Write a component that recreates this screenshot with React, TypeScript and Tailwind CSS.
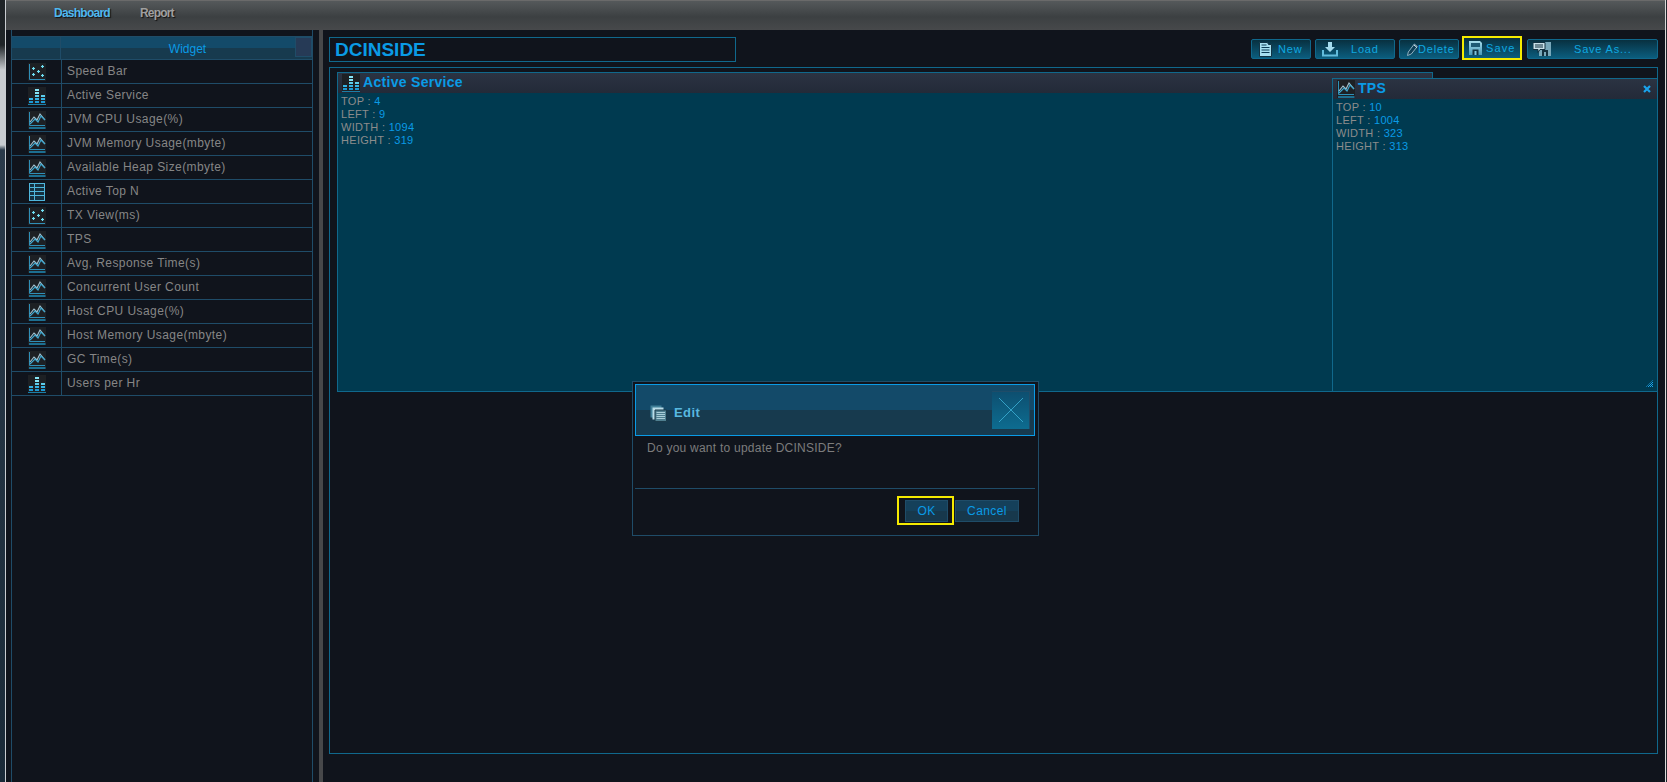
const font = "font-['Liberation_Sans',Arial,sans-serif]";

const panel = "bg-[#10141c]";

function ScatterIcon() {
  return (
    <svg width="18" height="18" viewBox="0 0 18 18" className="block">
      <rect width="18" height="18" fill="#1d2024" />
      <path d="M1.500 1v15.500H17" stroke="#2f8fb8" fill="none" />
      <path d="M4 5.500h3M5.500 4v3M13 3.500h3M14.500 2v3M9 8.500h3M10.500 7v3M4 11.500h3M5.500 10v3M13 12.500h3M14.500 11v3" stroke="#6fe0f4" strokeWidth="1.200" />
    </svg>
  );
}

function BarsIcon() {
  return (
    <svg width="18" height="18" viewBox="0 0 18 18" className="block">
      <rect width="18" height="18" fill="#1d2024" />
      <path d="M7 3h4M7 6h4" stroke="#86e4f6" strokeWidth="2" />
      <path d="M7 9h4M13 9h4" stroke="#5ccdec" strokeWidth="2" />
      <path d="M1 12h4M7 12h4M13 12h4" stroke="#35b3e4" strokeWidth="2" />
      <path d="M1 15h4M7 15h4M13 15h4" stroke="#1d9ad6" strokeWidth="2" />
      <path d="M0 17.500h18" stroke="#1a7fa8" />
    </svg>
  );
}

function LineIcon() {
  return (
    <svg width="18" height="18" viewBox="0 0 18 18" className="block">
      <rect width="18" height="18" fill="#1d2024" />
      <path d="M1.500 1v13.500H17" stroke="#2f8fb8" fill="none" />
      <path d="M2 11l4-5 3 3 3-6 5 6" stroke="#a4c4d2" strokeWidth="1.100" fill="none" />
      <path d="M2 13l5-5 3 3 3-6 4 4" stroke="#3fa8d0" strokeWidth="1.100" fill="none" />
      <path d="M1 17h16.500" stroke="#1d8ab6" strokeWidth="1.500" />
    </svg>
  );
}

function GridIcon() {
  return (
    <svg width="16" height="18" viewBox="0 0 16 18" className="block">
      <rect x="0.500" y="0.500" width="15" height="17" fill="#15303f" stroke="#4fb6dc" />
      <path d="M0 4.500h16M0 8.500h16M0 12.500h16M5.500 0v18" stroke="#4fb6dc" />
    </svg>
  );
}

const rows: [string, React.ReactNode][] = [
  ["Speed Bar", <ScatterIcon />],
  ["Active Service", <BarsIcon />],
  ["JVM CPU Usage(%)", <LineIcon />],
  ["JVM Memory Usage(mbyte)", <LineIcon />],
  ["Available Heap Size(mbyte)", <LineIcon />],
  ["Active Top N", <GridIcon />],
  ["TX View(ms)", <ScatterIcon />],
  ["TPS", <LineIcon />],
  ["Avg, Response Time(s)", <LineIcon />],
  ["Concurrent User Count", <LineIcon />],
  ["Host CPU Usage(%)", <LineIcon />],
  ["Host Memory Usage(mbyte)", <LineIcon />],
  ["GC Time(s)", <LineIcon />],
  ["Users per Hr", <BarsIcon />],
];

function Sidebar() {
  return (
    <aside className="ml-[5px] flex w-[302px] shrink-0 flex-col border-x border-[#1f4c68] pt-[6px]">
      <div className="relative flex h-[24px] border-y border-[#1f4c68] bg-[linear-gradient(#134a69_50%,#173a4e_50%)] text-[12px] text-[#0a9be6]">
        <div className="w-[49px] border-r border-[#1f4c68]" />
        <div className="flex flex-1 items-center justify-center pl-[2px] pt-[1px]">Widget</div>
        <div className="absolute right-0 top-0 h-[20px] w-[17px] border border-[#1f4c68] bg-[#263a56]" />
      </div>
      {rows.map(([name, icon]) => (
        <div key={name} className="flex h-[24px] border-b border-[#1f4c68] text-[12px] tracking-[0.42px] text-[#868686]">
          <div className="flex w-[50px] shrink-0 items-center justify-center border-r border-[#1f4c68]">{icon}</div>
          <div className="flex flex-1 items-center pb-[2px] pl-[5px]">{name}</div>
        </div>
      ))}
    </aside>
  );
}

function ToolButton({ icon, label, className, gap }: { icon: React.ReactNode; label: string; className: string; gap: string }) {
  return (
    <div className={`flex h-[20px] items-center rounded-[2px] border border-[#10688c] bg-[linear-gradient(#083040,#0b5d7e)] text-[11px] tracking-[0.8px] text-[#0fa8e0] ${className}`}>
      {icon}
      <span className={gap}>{label}</span>
    </div>
  );
}

function NewIcon() {
  return (
    <svg width="13" height="15" viewBox="0 0 13 15">
      <path d="M0.500 0.500h8l1 2h3v12h-12z" fill="#a8e0f0" stroke="#123445" />
      <path d="M2.500 5.500h8M2.500 8h8M2.500 10.500h8M2.500 3h5" stroke="#0d3d55" />
    </svg>
  );
}

function LoadIcon() {
  return (
    <svg width="16" height="15" viewBox="0 0 16 15">
      <path d="M6 0h4v5h3l-5 5-5-5h3z" fill="#a4dcee" />
      <path d="M1 8v5.500h14V8" stroke="#62bcdc" strokeWidth="2" fill="none" />
    </svg>
  );
}

function PencilIcon() {
  return (
    <svg width="11" height="13" viewBox="0 0 11 13">
      <path d="M0.500 12.500l0.800-3.500 6-8 3 2.500-6 7.500z" fill="#0f4058" stroke="#90b0c0" />
      <path d="M7 2l3 2.500" stroke="#d8e8ee" />
    </svg>
  );
}

function SaveIcon() {
  return (
    <svg width="13" height="14" viewBox="0 0 13 14">
      <defs>
        <linearGradient id="floppy" x1="0" y1="0" x2="0" y2="1">
          <stop offset="0" stopColor="#a6dcea" />
          <stop offset="1" stopColor="#4898b8" />
        </linearGradient>
      </defs>
      <path d="M0 0h11l2 2v12H0z" fill="url(#floppy)" />
      <rect x="2" y="2" width="9" height="4" fill="#1e5a74" />
      <path d="M3.500 14V8.500h6V14" fill="#123445" />
      <rect x="5.500" y="10" width="2" height="4" fill="#7fc4dc" />
    </svg>
  );
}

function SaveAsIcon() {
  return (
    <svg width="18" height="14" viewBox="0 0 18 14">
      <path d="M6 0h12v14H6z" fill="#78a8ba" />
      <rect x="9" y="8" width="6" height="6" fill="#12303f" />
      <rect x="11" y="10" width="2" height="4" fill="#78a8ba" />
      <path d="M0 0.500h12v7H7l-2 3v-3H0z" fill="#c8e0e8" stroke="#12303f" />
      <path d="M2 3h8M2 5h8" stroke="#12303f" />
    </svg>
  );
}

function CloseGlyph() {
  return (
    <svg width="8" height="8" viewBox="0 0 8 8">
      <path d="M1 1l6 6M7 1l-6 6" stroke="#1aa3ec" strokeWidth="2.200" />
    </svg>
  );
}

function WidgetHeader({ icon, title, close }: { icon: React.ReactNode; title: string; close?: boolean }) {
  return (
    <div className="flex h-[20px] items-center bg-[linear-gradient(#2b3342,#232a38)] pl-[4px] pr-[6px]">
      {icon}
      <span className="mb-[2px] ml-[3px] text-[14px] font-bold tracking-[0.3px] text-[#0a9be6]">{title}</span>
      {close && <span className="ml-auto flex"><CloseGlyph /></span>}
    </div>
  );
}

function Props({ values }: { values: [string, number][] }) {
  return (
    <div className="pl-[3px] pt-[2px] text-[11px] leading-[13px] tracking-[0.3px]">
      {values.map(([k, v]) => (
        <div key={k} className="text-[#8c8c8c]">
          {k} : <span className="text-[#0a9be6]">{v}</span>
        </div>
      ))}
    </div>
  );
}

function Dialog() {
  return (
    <div className={`absolute left-[632px] top-[381px] h-[155px] w-[407px] border border-[#1f4c68] ${panel} py-[2px] pl-[2px] pr-[3px]`}>
      <div className="flex h-[52px] items-center border border-[#0a9be6] bg-[linear-gradient(#134a69_50%,#173a4e_50%)] pl-[14px] pr-[4px]">
        <div className="mt-[6px] flex items-center">
          <svg width="17" height="17" viewBox="0 0 17 17">
            <path d="M0.500 0.500h11v12h-11z" fill="#3f7f98" />
            <path d="M2.500 2.500h11v12h-11z" fill="#b8dce8" />
            <path d="M5 5h11.500v11.500H5z" fill="#4f7f90" stroke="#1b3a4a" />
            <path d="M6.500 7.500h8.500M6.500 9.500h8.500M6.500 11.500h8.500M6.500 13.500h8.500" stroke="#a9cdd8" />
          </svg>
          <span className="ml-[7px] text-[13px] font-bold tracking-[0.4px] text-[#58b8e0]">Edit</span>
        </div>
        <div className="ml-auto mb-[1px] flex size-[38px] items-center justify-center border-t border-r border-[#1f4c68] bg-[linear-gradient(#0d4f70,#0d6c90)]">
          <svg width="26" height="26" viewBox="0 0 26 26">
            <path d="M1 1l24 24M25 1L1 25" stroke="#3fb2d8" strokeWidth="0.800" />
          </svg>
        </div>
      </div>
      <div className="h-[53px] border-b border-[#1f4c68] px-[12px] pt-[3px] text-[12px] tracking-[0.24px] text-[#7c7c7c]">
        Do you want to update DCINSIDE?
      </div>
      <div className="flex items-center justify-end pr-[16px] pt-[7px] text-[12px] tracking-[0.4px] text-[#0a9be6]">
        <div className="flex h-[29px] w-[57px] items-center border-2 border-[#f5ea00] pl-[6px]">
          <div className="flex h-[22px] w-[43px] items-center justify-center border border-[#1f4c68] bg-[linear-gradient(#15405a_50%,#17384c_50%)]">OK</div>
        </div>
        <div className="ml-[1px] flex h-[22px] w-[64px] items-center justify-center border border-[#1f4c68] bg-[linear-gradient(#15405a_50%,#17384c_50%)]">Cancel</div>
      </div>
    </div>
  );
}

export default function App() {
  return (
    <div className={`relative flex h-[782px] w-[1667px] overflow-hidden ${panel} ${font}`}>
      {/* desktop peeking out around the captured window */}
      <div className="w-[6px] shrink-0 border-r border-[#c8ccd0] bg-[linear-gradient(#1f2428_0,#1f2428_45px,#c8ccd0_70px,#c8ccd0_145px,#2a3a4a_150px,#1a2a38_100%)]" />
      <div className="flex w-[1659px] flex-col">
        <header className="flex h-[30px] shrink-0 items-center border-t border-[#6a6a6a] bg-[linear-gradient(#55595b,#3c4042_55%,#47494b)] pb-[6px] pl-[48px] text-[12px] font-bold [text-shadow:1px_1px_1px_#111]">
          <span className="tracking-[-0.75px] text-[#4fb8f0]">Dashboard</span>
          <span className="ml-[30px] tracking-[-0.8px] text-[#a0a0a0]">Report</span>
        </header>
        <div className="flex flex-1">
          <Sidebar />
          <div className="ml-[6px] w-[4px] shrink-0 bg-[#47484a]" />
          <main className="ml-[6px] flex w-[1329px] flex-col pb-[28px] pt-[7px]">
            <div className="flex h-[25px] items-start justify-between">
              <div className="flex h-[25px] w-[407px] items-center border border-[#10688c] pl-[5px] text-[19px] font-bold leading-none text-[#0a9be6]">DCINSIDE</div>
              <div className="flex items-start pt-[2px]">
                <ToolButton icon={<NewIcon />} label="New" className="w-[60px] pl-[7px]" gap="ml-[6px]" />
                <ToolButton icon={<LoadIcon />} label="Load" className="ml-[4px] w-[80px] pl-[6px]" gap="ml-[13px]" />
                <ToolButton icon={<PencilIcon />} label="Delete" className="ml-[4px] w-[60px] pl-[7px] tracking-[0.6px]" gap="" />
                <ToolButton icon={<SaveIcon />} label="Save" className="-mt-[3px] ml-[3px] h-[24px] w-[60px] rounded-none border-2 border-[#f5ea00] pl-[5px] tracking-[1.1px]" gap="ml-[4px]" />
                <ToolButton icon={<SaveAsIcon />} label="Save As..." className="ml-[5px] w-[131px] pl-[5px]" gap="ml-[23px]" />
              </div>
            </div>
            <div className="relative mt-[5px] flex-1 border border-[#10688c]">
              <div className="absolute left-[7px] top-[4px] h-[320px] w-[1096px] border border-[#10688c] bg-[#003a50]">
                <WidgetHeader icon={<BarsIcon />} title="Active Service" />
                <Props values={[["TOP", 4], ["LEFT", 9], ["WIDTH", 1094], ["HEIGHT", 319]]} />
              </div>
              <div className="absolute left-[1002px] top-[10px] h-[314px] w-[326px] border border-[#10688c] bg-[#003a50]">
                <WidgetHeader icon={<LineIcon />} title="TPS" close />
                <Props values={[["TOP", 10], ["LEFT", 1004], ["WIDTH", 323], ["HEIGHT", 313]]} />
                <svg width="7" height="7" viewBox="0 0 7 7" className="absolute bottom-[4px] right-[4px]">
                  <defs>
                    <pattern id="grip" width="2" height="2" patternUnits="userSpaceOnUse">
                      <rect width="1" height="1" fill="#1aa3ec" />
                      <rect x="1" y="1" width="1" height="1" fill="#1aa3ec" />
                    </pattern>
                  </defs>
                  <path d="M7 0v7H0z" fill="url(#grip)" />
                </svg>
              </div>
            </div>
          </main>
        </div>
      </div>
      <div className="w-[1px] shrink-0 bg-[#d8d8d8]" />
      <div className="w-[1px] shrink-0 bg-[#20262c]" />
      <Dialog />
    </div>
  );
}
